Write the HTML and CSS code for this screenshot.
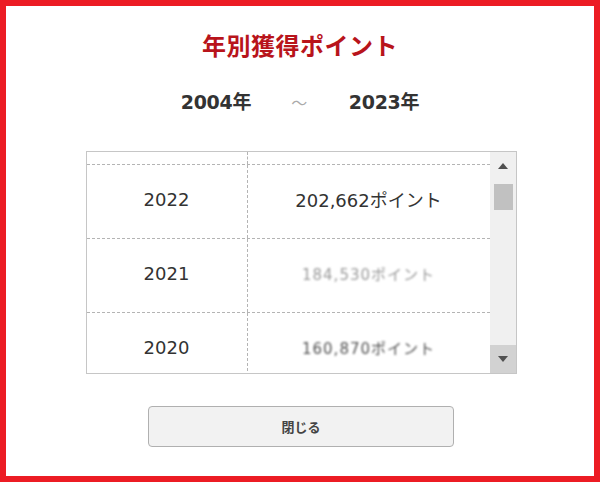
FILE: index.html
```html
<!DOCTYPE html>
<html lang="ja">
<head>
<meta charset="utf-8">
<title>年別獲得ポイント</title>
<link rel="stylesheet" href="styles.css">
</head>
<body>
<div class="frame">
  <h1 class="title">年別獲得ポイント</h1>
  <div class="range">
    <span class="range-year">2004年</span>
    <span class="range-sep">～</span>
    <span class="range-year">2023年</span>
  </div>
  <div class="list">
    <div class="viewport">
      <div class="rows">
        <div class="row row-hidden"><div class="cell year"></div><div class="cell pts"></div></div>
        <div class="row"><div class="cell year">2022</div><div class="cell pts">202,662ポイント</div></div>
        <div class="row"><div class="cell year">2021</div><div class="cell pts"><span class="mosaic">184,530ポイント</span></div></div>
        <div class="row"><div class="cell year">2020</div><div class="cell pts"><span class="mosaic dark">160,870ポイント</span></div></div>
      </div>
    </div>
    <div class="scrollbar">
      <div class="sb-btn"><span class="tri-up"></span></div>
      <div class="sb-track"><div class="sb-thumb"></div></div>
      <div class="sb-btn sb-btn-active"><span class="tri-down"></span></div>
    </div>
  </div>
  <button class="close-btn">閉じる</button>
</div>
</body>
</html>
```

FILE: styles.css
```css
* { box-sizing: border-box; }
html, body { margin: 0; padding: 0; }
body {
  width: 600px;
  height: 482px;
  font-family: "Noto Sans CJK JP", "Noto Sans", sans-serif;
  color: #333;
  background: #fff;
}
.frame {
  width: 600px;
  height: 482px;
  border: 6px solid #ec1c24;
  display: flex;
  flex-direction: column;
  align-items: center;
  padding-top: 23px;
}
.title {
  margin: 0;
  font-size: 24px;
  line-height: 32px;
  font-weight: 700;
  color: #b8141b;
  letter-spacing: 0.5px;
}
.range {
  margin-top: 28px;
  display: flex;
  align-items: center;
  font-family: "DejaVu Sans", "Noto Sans CJK JP", sans-serif;
  font-size: 19px;
  line-height: 26px;
  font-weight: 700;
  color: #333;
  letter-spacing: -0.3px;
}
.range-sep {
  font-family: "Noto Sans CJK JP", sans-serif;
  font-weight: 400;
  color: #aaa;
  margin: 0 42px 0 40px;
  font-size: 16px;
}
.list {
  margin-top: 36px;
  margin-left: 2px;
  width: 431px;
  height: 223px;
  border: 1px solid #c6c6c6;
  display: flex;
  flex-shrink: 0;
}
.viewport {
  flex: 1;
  overflow: hidden;
}
.row {
  display: flex;
  height: 74px;
  border-top: 1px dashed #b4b4b4;
}
.row-hidden {
  height: 12px;
  border-top: none;
}
.cell {
  display: flex;
  align-items: center;
  justify-content: center;
  font-family: "DejaVu Sans", "Noto Sans CJK JP", sans-serif;
  font-size: 18px;
  color: #333;
  padding-bottom: 5px;
  white-space: nowrap;
}
.row-hidden .cell { padding: 0; }
.year {
  width: 161px;
  border-right: 1px dashed #b4b4b4;
}
.pts {
  flex: 1;
}
.mosaic {
  color: #888;
  filter: blur(1px);
  opacity: 0.85;
  font-size: 15px;
  letter-spacing: 1px;
}
.mosaic.dark {
  color: #333;
}
.scrollbar {
  width: 26px;
  background: #f0f0f0;
  display: flex;
  flex-direction: column;
}
.sb-btn {
  height: 28px;
  display: flex;
  align-items: center;
  justify-content: center;
}
.sb-btn-active {
  background: #d2d2d2;
}
.sb-track {
  flex: 1;
  padding: 4px 3px 0 4px;
}
.sb-thumb {
  height: 26px;
  background: #c1c1c1;
}
.tri-up, .tri-down {
  width: 0;
  height: 0;
  border-left: 5px solid transparent;
  border-right: 5px solid transparent;
}
.tri-up { border-bottom: 6px solid #505050; }
.tri-down { border-top: 6px solid #505050; }
.close-btn {
  margin-top: 32px;
  margin-left: 2px;
  width: 306px;
  height: 41px;
  border: 1px solid #b0b0b0;
  border-radius: 4px;
  background: #f2f2f2;
  font-family: "Noto Sans CJK JP", sans-serif;
  font-size: 13px;
  font-weight: 700;
  color: #444;
  padding: 0;
}
```
